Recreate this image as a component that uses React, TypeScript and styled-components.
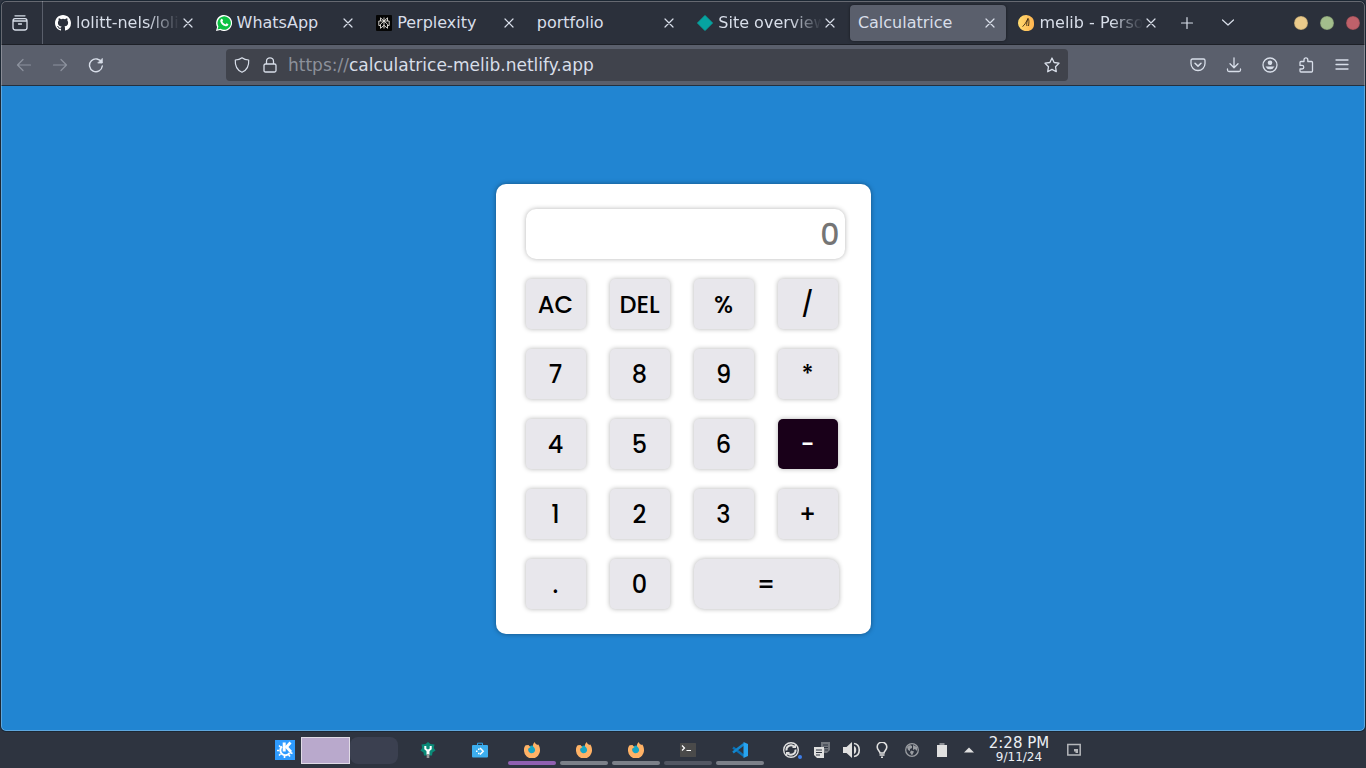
import React from "react";
import styled, { createGlobalStyle, css } from "styled-components";

const chromeFont = '"DejaVu Sans", sans-serif';
const keyFont = 'Poppins, Inter, sans-serif';

const GlobalStyle = createGlobalStyle`
  * { box-sizing: border-box; }
  body { margin: 0; background: #2e3440; }
  button, input { font: inherit; color: inherit; border: 0; margin: 0; padding: 0; background: none; outline: none; }
  button { cursor: pointer; }
  svg { display: block; flex: none; }
`;

const Desktop = styled.div`
  display: flex;
  flex-direction: column;
  min-height: 100vh;
  font-family: ${chromeFont};
  font-size: 16px;
  color: #d8dee9;
`;

const BrowserWindow = styled.div`
  position: relative;
  flex: 1;
  display: flex;
  flex-direction: column;
  border-radius: 5px;
  margin: 1px;
  overflow: hidden;
  background: #2e3440;
  box-shadow: 0 0 0 1px #1c2733;
  &::after {
    content: "";
    position: absolute;
    inset: 0;
    border: 1px solid rgba(255, 255, 255, 0.28);
    border-radius: 5px;
    pointer-events: none;
  }
`;

const TabStrip = styled.div`
  display: flex;
  align-items: center;
  height: 44px;
  padding-left: 1px;
  border-bottom: 1px solid #1d2027;
  background: #2b303b;
`;

const RecentButton = styled.button`
  display: grid;
  place-items: center;
  width: 41px;
  height: 43px;
  padding-right: 4px;
  border-right: 1px solid #5a5f6b;
`;

const Tabs = styled.div`
  flex: 1;
  min-width: 0;
  display: flex;
  gap: 4px;
  margin-left: 4px;
`;

const Tab = styled.div<{ $active?: boolean }>`
  flex: 1 1 0;
  min-width: 0;
  display: flex;
  align-items: center;
  height: 36px;
  padding: 0 8px;
  border-radius: 4px;
  ${(p) => p.$active && css`
    background: #5a5f6c;
    box-shadow: 0 0 3px rgba(0, 0, 0, 0.5);
  `}
`;

const TabIcon = styled.span`
  flex: none;
  width: 16px;
  margin-right: 5px;
`;

const TabTitle = styled.a<{ $fade?: boolean }>`
  flex: 1;
  min-width: 0;
  overflow: hidden;
  white-space: nowrap;
  line-height: 20px;
  color: inherit;
  text-decoration: none;
  ${(p) => p.$fade && css`
    mask-image: linear-gradient(to left, transparent, #000 32px);
  `}
`;

const TabClose = styled.button`
  display: grid;
  place-items: center;
  width: 16px;
  height: 20px;
`;

const StripActions = styled.div`
  display: flex;
  gap: 13px;
  margin-left: 6px;
`;

const IconButton = styled.button<{ $dim?: boolean }>`
  display: grid;
  place-items: center;
  width: 28px;
  height: 28px;
  opacity: ${(p) => (p.$dim ? 0.4 : 1)};
`;

const WindowControls = styled.div`
  display: flex;
  gap: 12px;
  margin: 0 5px 0 52px;
`;

const WindowDot = styled.button<{ $color: string }>`
  width: 14px;
  height: 14px;
  border-radius: 50%;
  background: ${(p) => p.$color};
  box-shadow: inset 0 0 1px #15181e;
`;

const Toolbar = styled.div`
  display: flex;
  align-items: center;
  height: 41px;
  padding: 0 9px;
  background: #5a5f6c;
  border-bottom: 1px solid #23303f;
`;

const ToolGroup = styled.div`
  display: flex;
  gap: 8px;
`;

const AddressBar = styled.form`
  flex: 1;
  min-width: 0;
  display: flex;
  align-items: center;
  height: 32px;
  margin: 0 116px;
  padding: 0 8px;
  gap: 10px;
  border-radius: 4px;
  background: #40434c;
`;

const SiteIcons = styled.span`
  display: flex;
  gap: 12px;
`;

const Address = styled.label`
  position: relative;
  flex: 1;
  min-width: 0;
  line-height: 24px;
  white-space: nowrap;
  font-size: 17px;
`;

const AddressInput = styled.input`
  position: absolute;
  inset: 0;
  width: 100%;
  color: transparent;
`;

const Scheme = styled.span`
  color: #8c909a;
`;

const Page = styled.main`
  flex: 1;
  display: grid;
  place-items: center;
  padding: 16px;
  background: #2185d2;
`;

const Calculator = styled.section`
  width: 375px;
  padding: 25px 26px 25px 30px;
  border-radius: 10px;
  background: #fff;
  box-shadow: 0 0 5px rgba(0, 0, 0, 0.4);
  font-family: ${keyFont};
  font-weight: 500;
`;

const Display = styled.input`
  && {
    display: block;
    width: 100%;
    height: 50px;
    padding: 2px 5px 0;
    margin-bottom: 20px;
    border-radius: 10px;
    background: #fff;
    box-shadow: 0 0 5px rgba(0, 0, 0, 0.3);
    text-align: right;
    font-size: 30px;
  }
  &::placeholder { color: #757575; opacity: 1; }
`;

const Keys = styled.div`
  display: grid;
  grid-template-columns: repeat(4, 60px);
  gap: 20px 24px;
`;

const Key = styled.button<{ $wide?: boolean; $pressed?: boolean }>`
  && {
    height: 50px;
    padding-top: 2px;
    border-radius: ${(p) => (p.$wide ? 10 : 5)}px;
    background: ${(p) => (p.$pressed ? "#190019" : "#e8e7ec")};
    color: ${(p) => (p.$pressed ? "#fff" : "#000")};
    font-size: 24px;
    line-height: 36px;
    box-shadow: 0 0 5px rgba(0, 0, 0, 0.3);
    ${(p) => p.$wide && css`
      grid-column: span 2;
      width: 145px;
    `}
  }
`;

const Taskbar = styled.footer`
  display: flex;
  align-items: center;
  justify-content: center;
  height: 36px;
  background: #2e3440;
`;

const Pager = styled.div`
  display: flex;
  margin: 0 6px;
`;

const Workspace = styled.button<{ $current?: boolean }>`
  width: 48px;
  height: 27px;
  border-radius: 8px;
  background: #3b4050;
  ${(p) => p.$current && css`
    width: 49px;
    border: 1px solid #e0dbe6;
    border-radius: 0;
    background: #b9a9cc;
  `}
`;

const Tasks = styled.div`
  display: flex;
  gap: 4px;
`;

const Task = styled.button<{ $bar?: string }>`
  display: grid;
  place-items: center;
  width: 48px;
  height: 36px;
  position: relative;
  &::after {
    content: "";
    position: absolute;
    left: 0;
    right: 0;
    bottom: 3px;
    height: 4px;
    border-radius: 2px;
    background: ${(p) => p.$bar || "transparent"};
  }
`;

const Tray = styled.div`
  display: flex;
  align-items: center;
  margin-left: 13px;
`;

const TrayButton = styled.button<{ $width?: number }>`
  display: grid;
  place-items: center;
  width: ${(p) => p.$width || 30}px;
  height: 36px;
`;

const Clock = styled.time`
  display: flex;
  flex-direction: column;
  align-items: center;
  width: 76px;
  padding-bottom: 2px;
  line-height: 16px;
  font-size: 15px;
  color: #eceff4;
`;

const ClockDate = styled.span`
  font-size: 12px;
  line-height: 12px;
`;

const Line = ({ size = 16, children }: { size?: number; children: React.ReactNode }) => (
  <svg width={size} height={size} viewBox={`0 0 ${size} ${size}`} fill="none" stroke="#d8dee9" strokeWidth="1.2" strokeLinecap="round" strokeLinejoin="round" aria-hidden="true">
    {children}
  </svg>
);

const Art = ({ size = 16, children }: { size?: number; children: React.ReactNode }) => (
  <svg width={size} height={size} viewBox="0 0 16 16" aria-hidden="true">{children}</svg>
);

const GithubIcon = () => (
  <Art><path fill="#fff" d="M8 0C3.58 0 0 3.58 0 8c0 3.54 2.29 6.53 5.47 7.59.4.07.55-.17.55-.38 0-.19-.01-.82-.01-1.49-2.01.37-2.53-.49-2.69-.94-.09-.23-.48-.94-.82-1.13-.28-.15-.68-.52-.01-.53.63-.01 1.08.58 1.23.82.72 1.21 1.87.87 2.33.66.07-.52.28-.87.51-1.07-1.78-.2-3.64-.89-3.64-3.95 0-.87.31-1.59.82-2.15-.08-.2-.36-1.02.08-2.12 0 0 .67-.21 2.2.82a7.6 7.6 0 0 1 4 0c1.53-1.04 2.2-.82 2.2-.82.44 1.1.16 1.92.08 2.12.51.56.82 1.27.82 2.15 0 3.07-1.87 3.75-3.65 3.95.29.25.54.73.54 1.48 0 1.07-.01 1.93-.01 2.2 0 .21.15.46.55.38A8.01 8.01 0 0 0 16 8c0-4.42-3.58-8-8-8z" /></Art>
);
const WhatsAppIcon = () => (
  <Art>
    <path fill="#fff" d="M0 16l1.1-4.1A8 8 0 1 1 4.200 15z" />
    <path fill="#0dc143" d="M1.500 14.500l.9-3.100A6.700 6.700 0 1 1 4.600 13.700z" />
    <path fill="#fff" d="M5.300 4.100c.5-.5 1-.3 1.200.2l.5 1.200c.1.300-.3.800-.6 1.100.6 1.300 1.600 2.200 3 2.800l.8-.9c.2-.2.400-.2.600-.1l1.400.7c.3.200.100 1-.3 1.500-.7.800-1.900.9-3 .5-2.200-.8-3.700-2.400-4.500-4.400-.3-1 .2-2 .9-2.600z" />
  </Art>
);
const PerplexityIcon = () => (
  <Art>
    <rect width="16" height="16" rx="1" fill="#050505" />
    <path d="M8 2.500v11M4.500 2.800L8 6l3.500-3.200V6M4.500 2.800V6M2.800 6h10.400v4.500h-1.700M2.800 6v4.500h1.700M8 6l-3.500 3.300v4L8 10.300M8 6l3.500 3.300v4L8 10.300" fill="none" stroke="#e4e2dc" strokeWidth=".9" />
  </Art>
);
const NetlifyIcon = () => (
  <Art><path d="M8 .5L15.500 8 8 15.500.5 8z" fill="#06a3a0" stroke="#06a3a0" strokeLinejoin="round" /></Art>
);
const MelibIcon = () => (
  <Art>
    <defs><linearGradient id="sun"><stop stopColor="#ffdb70" /><stop offset="1" stopColor="#ffb44f" /></linearGradient></defs>
    <path d="M8 0a8 8 0 0 1 6 2.500c2 2 2 4 2 7 0 4-3 6.500-7 6.500a8 8 0 0 1-9-8 8 8 0 0 1 8-8z" fill="url(#sun)" />
    <path d="M4.500 11.500c2-1 4-5 5.500-8-1 3-1.800 6-1 7.500M10 3.500c1.500 1 .8 5 .5 7.500" fill="none" stroke="#3c2a14" strokeWidth=".9" />
  </Art>
);
const KdeIcon = () => (
  <svg width="20" height="20" viewBox="0 0 20 20" aria-hidden="true">
    <rect width="20" height="20" fill="#2e9bff" />
    <path d="M7 6.500A5 5 0 1 0 14.500 13" fill="none" stroke="#fff" strokeWidth="2" />
    <path d="M5.500 7L4 5.500M4.300 10.500H2M5.500 14l-1.500 1.500M9.500 15.500v2.500M13.500 14.500l1.500 2M15 12.500l2.500 1" stroke="#fff" strokeWidth="1.600" />
    <path d="M9.200 2.500v9" stroke="#fff" strokeWidth="3" /><path d="M15.500 2.500L11.500 7l4.500 5" fill="none" stroke="#fff" strokeWidth="2.800" />
  </svg>
);
const WrenchIcon = () => (
  <Art>
    <path d="M5.500 2L8 0l2.500 2 4 .5-.7 3.500L15.500 8.500l-3 2-.5 3H4l-.5-3-3-2L2.200 6l-.7-3.500z" fill="#0b8a78" />
    <path d="M5.300 4v2.800L8 9l2.700-2.200V4" fill="none" stroke="#fff" strokeWidth="2" />
    <path d="M8 8v4.500" stroke="#fff" strokeWidth="3" /><path d="M8 12V16" stroke="#999" strokeWidth="2.600" />
  </Art>
);
const StoreIcon = () => (
  <Art>
    <path d="M5.500 4V1.200h5V4" fill="none" stroke="#2fa5ec" />
    <rect y="3" width="16" height="12.500" rx="1" fill="#3daeee" />
    <path d="M8 6l3.200 3.200L8 12.500" fill="none" stroke="#fff" strokeWidth="1.500" />
    <path d="M6 6.500h1.500V8H6zM4 8.500h1.500V10H4zM6 10.800h1.500v1.500H6z" fill="#fff" />
  </Art>
);
const FirefoxIcon = () => (
  <Art>
    <circle cx="8.500" cy="8" r="4.500" fill="#14a5c5" />
    <path d="M1.700 3.200L4.500 3l2 2.200C4 6 3.500 8 5 10c1.800 2 5 1.500 5.800-.7.800-2-.3-3.500-1.700-4.800C8.700 2.800 9.500 1 11 0c-.2 2 1.500 2.300 2.600 3l.4-.8c1.500 1.500 2 3.700 2 5.800a8 8 0 0 1-16 1C-.2 6.500.3 4.500 1.700 3.200z" fill="#ffb266" />
  </Art>
);
const TerminalIcon = () => (
  <Art><rect y="1" width="16" height="14" rx=".6" fill="#4a4a4a" /><path d="M2 3.500L4.500 6 2 8.500M6.500 8.500h4.500" fill="none" stroke="#fff" strokeWidth="1.200" /></Art>
);
const CodeIcon = () => (
  <Art>
    <path d="M1 5.500L12 14" stroke="#0b70b5" strokeWidth="2.400" />
    <path d="M1 10.500L12 2" stroke="#1286ce" strokeWidth="2.400" />
    <path d="M11.500 0L16 2v12l-4.500 2z" fill="#28a4f0" />
  </Art>
);

const tabs: { title: string; icon?: React.ReactNode; fade?: boolean; active?: boolean }[] = [
  { title: "lolitt-nels/loli", icon: <GithubIcon />, fade: true },
  { title: "WhatsApp", icon: <WhatsAppIcon /> },
  { title: "Perplexity", icon: <PerplexityIcon /> },
  { title: "portfolio" },
  { title: "Site overview", icon: <NetlifyIcon />, fade: true },
  { title: "Calculatrice", active: true },
  { title: "melib - Perso", icon: <MelibIcon />, fade: true },
];

const keys = ["AC", "DEL", "%", "/", "7", "8", "9", "*", "4", "5", "6", "-", "1", "2", "3", "+", ".", "0", "="];

const tasks: { name: string; icon: React.ReactNode; bar?: string }[] = [
  { name: "Settings", icon: <WrenchIcon /> },
  { name: "Discover", icon: <StoreIcon /> },
  { name: "Firefox", icon: <FirefoxIcon />, bar: "#9060b0" },
  { name: "Firefox", icon: <FirefoxIcon />, bar: "#7c8089" },
  { name: "Firefox", icon: <FirefoxIcon />, bar: "#7c8089" },
  { name: "Terminal", icon: <TerminalIcon />, bar: "#535763" },
  { name: "Code", icon: <CodeIcon />, bar: "#7c8089" },
];

const tray: { name: string; icon: React.ReactNode }[] = [
  { name: "Updates", icon: (
    <svg width="20" height="18" viewBox="0 0 20 18" aria-hidden="true">
      <circle cx="9" cy="9" r="7.300" fill="none" stroke="#e0e0e0" strokeWidth="1.400" />
      <path d="M4.500 9.500a4.500 4.500 0 0 1 7.500-4M13.500 8.500a4.500 4.500 0 0 1-7.500 4" fill="none" stroke="#e0e0e0" strokeWidth="2" />
      <path d="M10 7h4V3zM8 11H4v4z" fill="#e0e0e0" /><circle cx="18" cy="16" r="2" fill="#3d7eea" />
    </svg>) },
  { name: "Clipboard", icon: (
    <Art><path d="M7 0h9v8l-3 3H7z" fill="#73777e" /><path d="M9 3h5M9 5.500h5M11 8h3" stroke="#2e3440" />
      <path d="M0 5h10v11H3l-3-3z" fill="#e0e0e0" /><path d="M2 8h6M2 10.500h6M2 13h4" stroke="#2e3440" /></Art>) },
  { name: "Volume", icon: (
    <svg width="18" height="16" viewBox="0 0 18 16" aria-hidden="true"><path d="M0 5h3.500L9 0v16l-5.500-5H0z" fill="#e0e0e0" /><path d="M11 4c3 1 3 7 0 8z" fill="#e0e0e0" /><path d="M11 1.500c7 1 7 12 0 13" fill="none" stroke="#e0e0e0" strokeWidth="1.600" /></svg>) },
  { name: "Night light", icon: (
    <Art><path d="M6 11c0-2-2.800-3-2.800-6a4.800 4.800 0 0 1 9.600 0c0 3-2.800 4-2.800 6z" fill="none" stroke="#e0e0e0" strokeWidth="1.600" /><path d="M5.500 13h5M7 15.300h2" stroke="#e0e0e0" strokeWidth="1.400" /></Art>) },
  { name: "Network", icon: (
    <Art><circle cx="8" cy="8" r="6.300" fill="none" stroke="#9a9da2" strokeWidth="1.300" /><path d="M3 5l3-2 2 1v2l-2 1v2L4 8zM9 3l4 2v4l-2-2-2 1zM7 8.500l3 1-2 4-2-3z" fill="#9a9da2" /></Art>) },
  { name: "Battery", icon: (
    <Art><path d="M5.500 1h5v2h-5z" fill="#8b8e94" /><rect x="3" y="3" width="10" height="12" fill="#e0e0e0" /></Art>) },
];

export default function App() {
  return (
    <Desktop>
      <GlobalStyle />
      <BrowserWindow>
        <TabStrip>
          <RecentButton aria-label="Recent browsing">
            <Line><path d="M3 .8h10M1 6q0-2.400 2-2.400h10Q15 3.600 15 6zM1 6v6.500q0 2.500 2.500 2.500h9q2.500 0 2.500-2.500V6M6.500 9h3" strokeWidth="1.300" /></Line>
          </RecentButton>
          <Tabs>
            {tabs.map((t) => (
              <Tab key={t.title} $active={t.active}>
                {t.icon && <TabIcon>{t.icon}</TabIcon>}
                <TabTitle href="#" $fade={t.fade}>{t.title}</TabTitle>
                <TabClose aria-label={`Close ${t.title}`}><Line size={10}><path d="M1 1l8 8M9 1L1 9" /></Line></TabClose>
              </Tab>
            ))}
          </Tabs>
          <StripActions>
            <IconButton aria-label="New tab"><Line><path d="M8 2.500v11M2.500 8h11" /></Line></IconButton>
            <IconButton aria-label="List tabs"><Line><path d="M2.500 5L8 10l5.500-5" /></Line></IconButton>
          </StripActions>
          <WindowControls>
            <WindowDot $color="#ebcb8b" aria-label="Minimize" />
            <WindowDot $color="#a3be8c" aria-label="Maximize" />
            <WindowDot $color="#bf616a" aria-label="Close" />
          </WindowControls>
        </TabStrip>
        <Toolbar>
          <ToolGroup>
            <IconButton $dim aria-label="Back"><Line><path d="M14.500 8h-13M7 2.500L1.500 8 7 13.500" /></Line></IconButton>
            <IconButton $dim aria-label="Forward"><Line><path d="M1.500 8h13M9 2.500L14.500 8 9 13.500" /></Line></IconButton>
            <IconButton aria-label="Reload"><Line><path d="M13.700 5.500A6.400 6.400 0 1 0 14.300 9" strokeWidth="1.400" /><path d="M14.300 1.800v4.200h-4.200z" fill="#d8dee9" strokeWidth=".8" /></Line></IconButton>
          </ToolGroup>
          <AddressBar>
            <SiteIcons>
              <Line><path d="M8 .8c2 1.600 4.200 2.100 6.700 2.200.4 6-2 10.300-6.700 12.300C3.300 13.300.9 9 1.300 3 3.800 2.900 6 2.400 8 .8z" /></Line>
              <Line><path d="M3.500 7h9q1.500 0 1.500 1.500v5q0 1.500-1.500 1.500h-9Q2 15 2 13.500v-5Q2 7 3.500 7zM4.500 7V4.300a3.500 3.500 0 0 1 7 0V7" strokeWidth="1.300" /></Line>
            </SiteIcons>
            <Address>
              <Scheme>https://</Scheme>calculatrice-melib.netlify.app
              <AddressInput aria-label="Address" />
            </Address>
            <Line><path d="M8 1l2.100 4.500 4.900.7-3.500 3.500.8 5L8 12.400l-4.300 2.300.8-5L1 6.200l4.900-.7z" strokeWidth="1.300" /></Line>
          </AddressBar>
          <ToolGroup>
            <IconButton aria-label="Save to Pocket"><Line><path d="M2.500 2h11Q15 2 15 3.500v3a7 7 0 0 1-14 0v-3Q1 2 2.500 2z" strokeWidth="1.300" /><path d="M5 6.200l3 2.900 3-2.900" strokeWidth="1.500" /></Line></IconButton>
            <IconButton aria-label="Downloads"><Line><path d="M8 .8v9.700M4 6.700l4 4 4-4M1.500 12v1q0 1.500 1.500 1.500h10q1.500 0 1.500-1.500v-1" strokeWidth="1.300" /></Line></IconButton>
            <IconButton aria-label="Account"><Line><circle cx="8" cy="8" r="7" strokeWidth="1.300" /><circle cx="8" cy="5.800" r="2.300" fill="#d8dee9" stroke="none" /><path d="M3.500 9.500h9a5 5 0 0 1-9 0z" fill="#d8dee9" stroke="none" /></Line></IconButton>
            <IconButton aria-label="Extensions"><Line><path d="M6 4.500V2.800a1.900 1.900 0 0 1 3.800 0v1.700h3.700q1 0 1 1v8.500q0 1-1 1H3q-1 0-1-1v-2h2a1.700 1.700 0 0 0 0-3.600H2V5.500q0-1 1-1z" strokeWidth="1.300" /></Line></IconButton>
            <IconButton aria-label="Menu"><Line><path d="M2 3h12M2 7.500h12M2 12h12" strokeWidth="1.300" /></Line></IconButton>
          </ToolGroup>
        </Toolbar>
        <Page>
          <Calculator>
            <Display placeholder="0" aria-label="Result" />
            <Keys>
              {keys.map((k) => (
                <Key key={k} $wide={k === "="} $pressed={k === "-"}>{k}</Key>
              ))}
            </Keys>
          </Calculator>
        </Page>
      </BrowserWindow>
      <Taskbar>
        <KdeIcon />
        <Pager>
          <Workspace $current aria-label="Desktop 1" />
          <Workspace aria-label="Desktop 2" />
        </Pager>
        <Tasks>
          {tasks.map((t, i) => (
            <Task key={i} $bar={t.bar} aria-label={t.name}>{t.icon}</Task>
          ))}
        </Tasks>
        <Tray>
          {tray.map((t) => (
            <TrayButton key={t.name} aria-label={t.name}>{t.icon}</TrayButton>
          ))}
          <TrayButton $width={24} aria-label="Show hidden icons">
            <Art size={10}><path d="M0 12l8-8 8 8z" fill="#e0e0e0" /></Art>
          </TrayButton>
        </Tray>
        <Clock>2:28 PM<ClockDate>9/11/24</ClockDate></Clock>
        <TrayButton $width={34} aria-label="Show desktop">
          <Art><path d="M1.800 2.500h12.400v10.500H1.800z" fill="none" stroke="#b4b6ba" strokeWidth="1.500" /><path d="M8 7h4v4H9.500V9.500H8z" fill="#b4b6ba" /></Art>
        </TrayButton>
      </Taskbar>
    </Desktop>
  );
}
